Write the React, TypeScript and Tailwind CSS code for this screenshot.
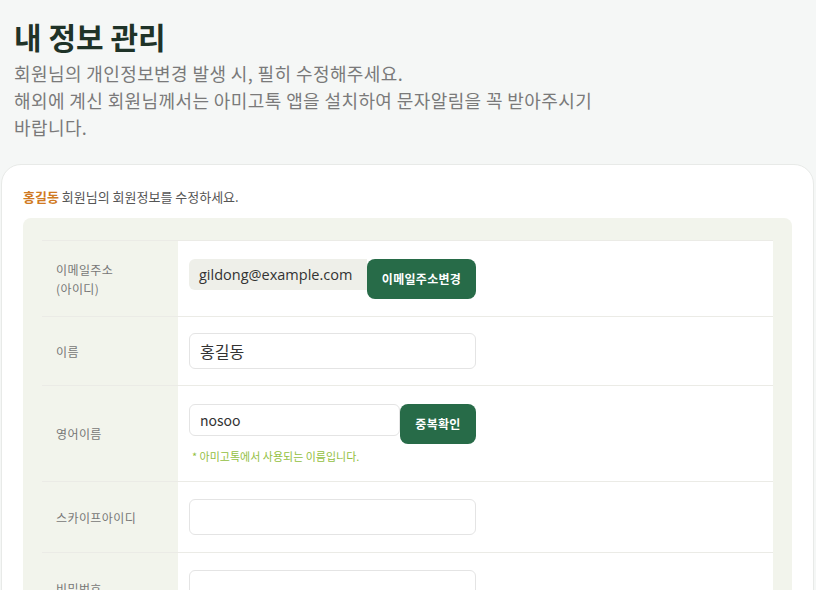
const KR = "font-['Noto_Sans_CJK_KR','Noto_Sans',sans-serif]";

type Row = {
  label: React.ReactNode;
  body: React.ReactNode;
  pad: string;
};

function GreenButton({ children, width }: { children: React.ReactNode; width: string }) {
  return (
    <button
      className={`${width} h-[40px] shrink-0 rounded-[8px] bg-[#276b48] text-[12px] font-bold tracking-[0.3px] text-white`}
      type="button"
    >
      {children}
    </button>
  );
}

function TextInput({ value = "", size = "text-[16px]", height = "h-[36px]", width = "w-[287px]" }: { value?: string; size?: string; height?: string; width?: string }) {
  return (
    <div
      className={`${width} ${height} ${size} flex items-center rounded-[6px] border border-[#e4e4e4] bg-white pl-[10px] text-[#333]`}
    >
      {value}
    </div>
  );
}

const rows: Row[] = [
  {
    label: (
      <>
        이메일주소
        <br />
        (아이디)
      </>
    ),
    pad: "pt-[18px] pb-[17px]",
    body: (
      <div className="flex items-start">
        <div className="flex h-[31px] w-[178px] items-center rounded-l-[6px] bg-[#eeefe9] pl-[10px] font-['Open_Sans','Noto_Sans_CJK_KR',sans-serif] text-[14.5px] text-[#333]">
          gildong@example.com
        </div>
        <GreenButton width="w-[109px]">이메일주소변경</GreenButton>
      </div>
    ),
  },
  {
    label: "이름",
    pad: "py-[16px]",
    body: <TextInput value="홍길동" />,
  },
  {
    label: "영어이름",
    pad: "pt-[18px] pb-[17px]",
    body: (
      <div>
        <div className="flex items-start">
          <TextInput value="nosoo" size="text-[14px]" height="h-[32px]" width="w-[211px]" />
          <GreenButton width="w-[76px]">중복확인</GreenButton>
        </div>
        <p className="mt-[5px] pl-[3px] text-[11px] leading-[15px] text-[#93c03f]">* 아미고톡에서 사용되는 이름입니다.</p>
      </div>
    ),
  },
  {
    label: "스카이프아이디",
    pad: "py-[17px]",
    body: <TextInput />,
  },
  {
    label: "비밀번호",
    pad: "py-[17px]",
    body: <TextInput />,
  },
];

export default function App() {
  return (
    <div className={`${KR} h-[590px] overflow-hidden bg-[#f5f7f6]`}>
      <header className="px-[14px] pt-[16px]">
        <h1 className="text-[30px] font-bold leading-[40px] text-[#1f3328]">내 정보 관리</h1>
        <p className="mt-[4px] max-w-[610px] break-keep text-[18px] leading-[27px] tracking-[0.4px] text-[#7a7a7a]">
          회원님의 개인정보변경 발생 시, 필히 수정해주세요.
          <br />
          해외에 계신 회원님께서는 아미고톡 앱을 설치하여 문자알림을 꼭 받아주시기 바랍니다.
        </p>
      </header>

      <section className="ml-[1px] mr-[2px] mt-[23px] rounded-[20px] border border-[#e8eae8] bg-white px-[21px] pt-[23px]">
        <p className="text-[13px] leading-[18px] text-[#555]">
          <span className="font-bold text-[#d07a22]">홍길동</span> 회원님의 회원정보를 수정하세요.
        </p>

        <div className="mt-[12px] rounded-[8px] bg-[#f2f4ec] px-[19px] pt-[22px]">
          {rows.map((row, i) => (
            <div className="grid grid-cols-[136px_1fr] border-t border-[#ebebe6]" key={i}>
              <div className="flex items-center pl-[14px] text-[12px] leading-[19px] tracking-[0.4px] text-[#777]">{row.label}</div>
              <div className={`bg-white px-[11px] ${row.pad}`}>{row.body}</div>
            </div>
          ))}
        </div>
      </section>
    </div>
  );
}
